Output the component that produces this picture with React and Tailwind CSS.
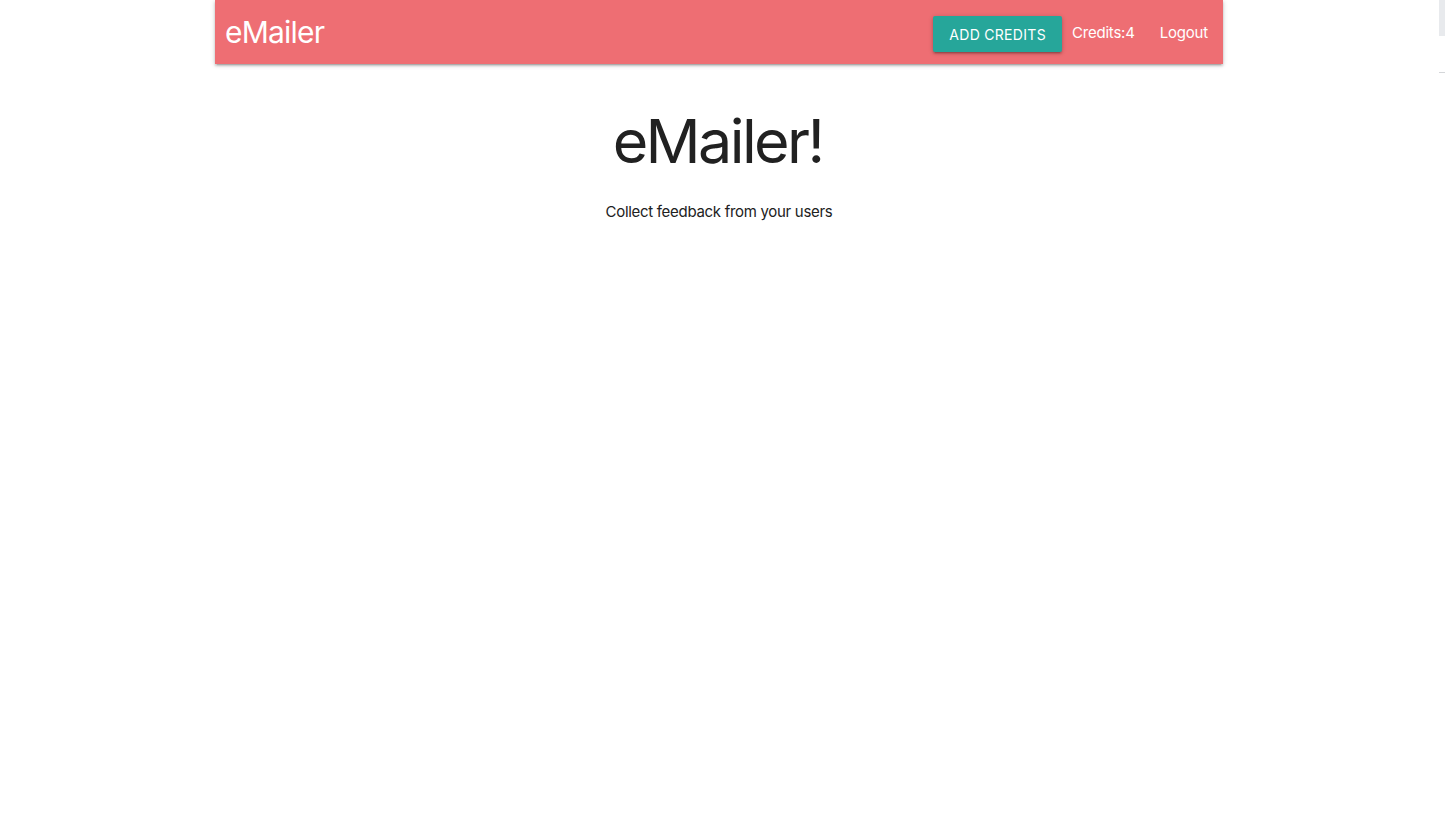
import React from 'react';

const Header = ({ credits = 4 }) => {
  return (
    <nav className="h-16 w-[1008px] mx-auto bg-[#ee6e73] text-white flex items-center justify-between shadow-[0_2px_2px_0_rgba(0,0,0,0.14),0_3px_1px_-2px_rgba(0,0,0,0.12),0_1px_5px_0_rgba(0,0,0,0.2)]">
      <a href="#" className="pl-[10px] text-[30px] tracking-[-0.8px] leading-none">eMailer</a>
      <ul className="flex items-center h-full">
        <li>
          <button className="mt-1 h-9 px-4 bg-[#26a69a] text-white text-[14px] uppercase tracking-[0.3px] rounded-[2px] shadow-[0_2px_2px_0_rgba(0,0,0,0.14),0_3px_1px_-2px_rgba(0,0,0,0.12),0_1px_5px_0_rgba(0,0,0,0.2)]">
            Add Credits
          </button>
        </li>
        <li className="mx-[10px] mt-[2px] text-[15px] tracking-[-0.2px]">Credits:{credits}</li>
        <li>
          <a href="#" className="block mt-[2px] px-[15px] text-[15px] tracking-[-0.2px]">Logout</a>
        </li>
      </ul>
    </nav>
  );
};

const Landing = () => {
  return (
    <div className="text-center text-[#212121]">
      <h1 className="pt-[44px] pl-[-2px] mr-[3px] text-[61px] tracking-[-2.6px] leading-[1.1]">eMailer!</h1>
      <p className="mt-[26px] text-[15px] tracking-[-0.3px] leading-[1.5]">Collect feedback from your users</p>
    </div>
  );
};

export default function App() {
  return (
    <div className="flex min-h-[823px] bg-white font-['Inter',sans-serif]">
      <main className="w-[1438px]">
        <Header />
        <Landing />
      </main>
      <aside className="w-[7px] pl-[1px]">
        <div className="h-9 bg-[#e8eaed]" />
        <div className="mt-[36px] h-px bg-[#d4d6d9]" />
      </aside>
    </div>
  );
}
